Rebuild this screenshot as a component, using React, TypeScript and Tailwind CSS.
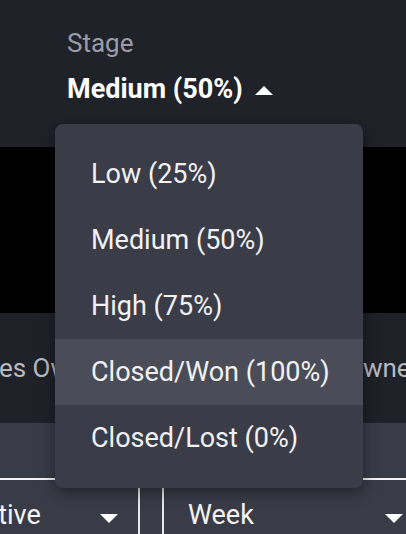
import React from 'react';

const stages = ['Low (25%)', 'Medium (50%)', 'High (75%)', 'Closed/Won (100%)', 'Closed/Lost (0%)'];

function Caret({ up = false, className = '' }: { up?: boolean; className?: string }) {
  return (
    <svg width="18" height="9" viewBox="0 0 18 9" className={className}>
      {up ? <polygon points="0,9 9,0 18,9" fill="#fff" /> : <polygon points="0,0 18,0 9,9" fill="#fff" />}
    </svg>
  );
}

export default function App() {
  const hovered = 'Closed/Won (100%)';

  return (
    <div className="relative w-[406px] h-[534px] overflow-hidden bg-black font-['Roboto',sans-serif]">
      {/* header with the stage picker */}
      <div className="h-[147px] bg-[#20222a] pl-[67px] pt-[26px]">
        <div className="text-[26px] leading-[34px] text-[#9a9da6]">Stage</div>
        <div className="mt-[12px] flex items-center gap-[12px] text-[27px] leading-[34px] font-bold text-white">
          <span>Medium (50%)</span>
          <Caret up className="mt-[2px]" />
        </div>
      </div>

      {/* chart area */}
      <div className="h-[166px] bg-black" />

      {/* tabs row */}
      <div className="h-[110px] bg-[#1f2129] flex items-center overflow-hidden whitespace-nowrap text-[26px] text-[#b7bac1]">
        <div className="w-[345px] shrink-0">
          <span className="ml-[-37px]">Sales Owner</span>
        </div>
        <span>Owner</span>
      </div>

      {/* filters */}
      <div className="h-[111px] bg-[#393c47]">
        <div className="h-[55px]" />
        <div className="h-[2px] bg-[#f2f2f2]" />
        <div className="flex h-[70px] text-[27px] text-[#f4f4f4]">
          <div className="w-[138px] flex items-center overflow-hidden whitespace-nowrap">
            <span className="ml-[-54px]">Relative</span>
            <Caret className="ml-auto mr-[20px] mt-[6px] shrink-0" />
          </div>
          <div className="w-[2px] bg-[#e8e8e8]" />
          <div className="w-[22px]" />
          <div className="w-[2px] bg-[#e8e8e8]" />
          <div className="flex-1 flex items-center pl-[24px]">
            <span>Week</span>
            <Caret className="ml-auto mr-[3px] mt-[6px]" />
          </div>
        </div>
      </div>

      {/* open dropdown menu */}
      <div className="absolute left-[55px] top-[124px] w-[308px] rounded-[8px] bg-[#3a3d48] py-[17px] shadow-[0_4px_16px_rgba(0,0,0,0.45)]">
        {stages.map((s) => (
          <div
            key={s}
            className={`h-[66px] flex items-center pl-[36px] text-[27px] text-[#f2f2f4] ${s === hovered ? 'bg-[#4a4d58]' : ''}`}
          >
            {s}
          </div>
        ))}
      </div>
    </div>
  );
}
